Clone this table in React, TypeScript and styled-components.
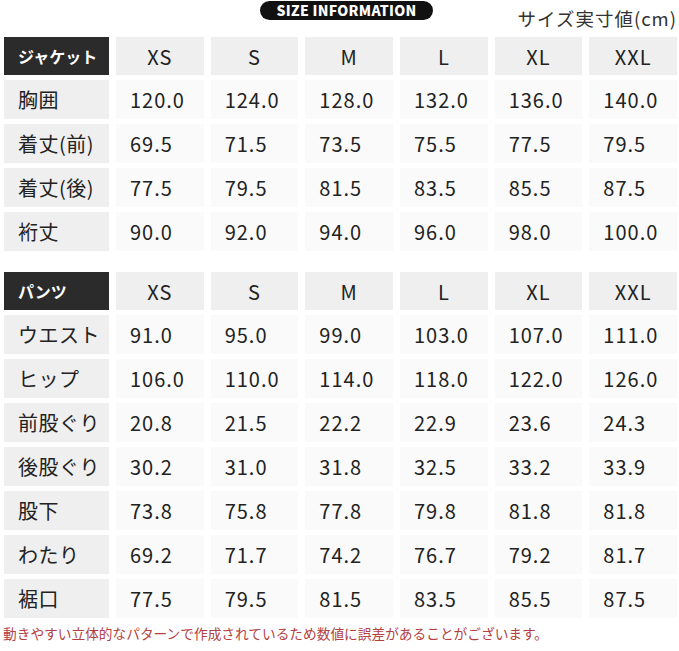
import React from "react";
import styled, { createGlobalStyle } from "styled-components";

const Global = createGlobalStyle`
  body {
    margin: 0;
    background: #ffffff;
    font-family: "Noto Sans CJK JP", "Noto Sans", sans-serif;
    color: #222;
  }
`

const Page = styled.div`
  width: 679px;
  box-sizing: border-box;
  padding: 0 2px 0 4px;
`

const TopBar = styled.div`
  height: 37px;
  display: grid;
  grid-template-columns: 1fr auto 1fr;
`

const Pill = styled.div`
  grid-column: 2;
  margin: 1px 0 0 12px;
  height: 19px;
  width: 173px;
  border-radius: 10px;
  background: #111;
  color: #fff;
  font-weight: 900;
  font-size: 14px;
  line-height: 19px;
  text-align: center;
  letter-spacing: 0.3px;
`

const Unit = styled.div`
  grid-column: 3;
  justify-self: end;
  margin-top: 6px;
  font-size: 18.5px;
  line-height: 24px;
  letter-spacing: 1px;
  color: #333;
`

const Table = styled.div<{ $gap?: number }>`
  display: grid;
  grid-template-columns: 105px repeat(6, 1fr);
  column-gap: 7px;
  row-gap: 5px;
  margin-top: ${p => p.$gap ?? 0}px;
`

const Corner = styled.div`
  height: 38px;
  background: #2b2b2b;
  color: #fff;
  font-weight: 700;
  font-size: 16px;
  display: flex;
  align-items: center;
  padding-left: 14px;
`

const Size = styled.div`
  height: 38px;
  background: #efefef;
  font-size: 20px;
  letter-spacing: 1px;
  display: flex;
  align-items: center;
  justify-content: center;
`

const Label = styled.div`
  height: 39px;
  background: #efefef;
  font-size: 20px;
  letter-spacing: 0.5px;
  display: flex;
  align-items: center;
  padding-left: 14px;
`

const Value = styled.div`
  height: 39px;
  background: #fafafa;
  font-size: 20px;
  letter-spacing: 1px;
  display: flex;
  align-items: center;
  padding-left: 14px;
`

const Note = styled.div`
  margin-top: 6px;
  margin-left: -1px;
  font-size: 13.7px;
  line-height: 18px;
  color: #b4413f;
`

const sizes = ["XS", "S", "M", "L", "XL", "XXL"];

const jacket: [string, string[]][] = [
  ["胸囲", ["120.0", "124.0", "128.0", "132.0", "136.0", "140.0"]],
  ["着丈(前)", ["69.5", "71.5", "73.5", "75.5", "77.5", "79.5"]],
  ["着丈(後)", ["77.5", "79.5", "81.5", "83.5", "85.5", "87.5"]],
  ["裄丈", ["90.0", "92.0", "94.0", "96.0", "98.0", "100.0"]],
];

const pants: [string, string[]][] = [
  ["ウエスト", ["91.0", "95.0", "99.0", "103.0", "107.0", "111.0"]],
  ["ヒップ", ["106.0", "110.0", "114.0", "118.0", "122.0", "126.0"]],
  ["前股ぐり", ["20.8", "21.5", "22.2", "22.9", "23.6", "24.3"]],
  ["後股ぐり", ["30.2", "31.0", "31.8", "32.5", "33.2", "33.9"]],
  ["股下", ["73.8", "75.8", "77.8", "79.8", "81.8", "81.8"]],
  ["わたり", ["69.2", "71.7", "74.2", "76.7", "79.2", "81.7"]],
  ["裾口", ["77.5", "79.5", "81.5", "83.5", "85.5", "87.5"]],
];

const SizeTable = ({ title, rows, gap }: { title: string; rows: [string, string[]][]; gap?: number }) => (
  <Table $gap={gap}>
    <Corner>{title}</Corner>
    {sizes.map(s => <Size key={s}>{s}</Size>)}
    {rows.map(([label, vals]) => (
      <React.Fragment key={label}>
        <Label>{label}</Label>
        {vals.map((v, i) => <Value key={i}>{v}</Value>)}
      </React.Fragment>
    ))}
  </Table>
)

export default function App() {
  return (
    <Page>
      <Global />
      <TopBar>
        <Pill>SIZE INFORMATION</Pill>
        <Unit>サイズ実寸値(cm)</Unit>
      </TopBar>
      <SizeTable title="ジャケット" rows={jacket} />
      <SizeTable title="パンツ" rows={pants} gap={21} />
      <Note>動きやすい立体的なパターンで作成されているため数値に誤差があることがございます。</Note>
    </Page>
  )
}
